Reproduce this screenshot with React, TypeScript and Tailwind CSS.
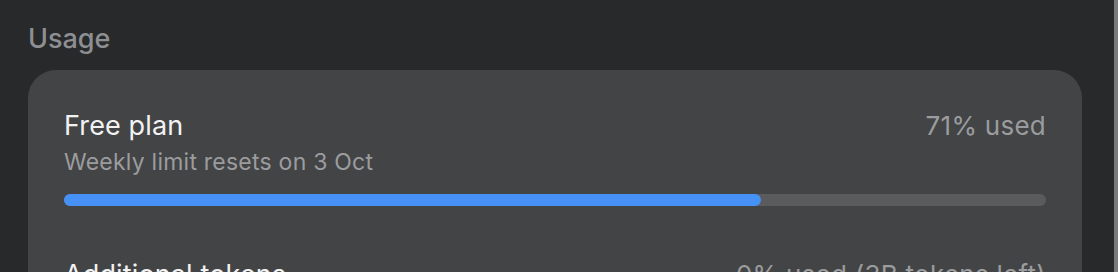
export default function App() {
  const plans = [
    { name: "Free plan", note: "Weekly limit resets on 3 Oct", used: "71% used", pct: 71 },
    { name: "Additional tokens", note: "", used: "0% used (3B tokens left)", pct: 0 },
  ];

  return (
    <div
      className="flex h-[272px] w-full overflow-hidden bg-[#28292b]"
      style={{ fontFamily: "Inter, 'Noto Sans', sans-serif" }}
    >
      <div className="flex-1 pl-[28px] pr-[32px] pt-[22px]">
        <h2 className="text-[27px] leading-[34px] font-medium text-[#8e8f92]">Usage</h2>
        <div className="mt-[14px] rounded-[28px] bg-[#434446] px-[36px] pt-[40px] pb-[40px]">
          {plans.map((p, i) => (
            <div key={p.name} className={i > 0 ? "mt-[53px]" : ""}>
              <div className="flex items-baseline justify-between">
                <span className="text-[27px] leading-[32px] tracking-[0.005em] text-[#f2f2f3]">{p.name}</span>
                <span className="text-[26px] leading-[32px] tracking-[0.01em] text-[#9b9c9e]">{p.used}</span>
              </div>
              {p.note && (
                <p className="mt-[6px] text-[23px] leading-[28px] tracking-[0.01em] text-[#9b9c9e]">{p.note}</p>
              )}
              <div className="mt-[18px] h-[12px] w-full rounded-full bg-[#5a5b5d]">
                <div className="h-full rounded-full bg-[#4691f6]" style={{ width: `${p.pct}%` }} />
              </div>
            </div>
          ))}
        </div>
      </div>
      <div className="w-[4px] bg-[#7a7a7b]" />
    </div>
  );
}
